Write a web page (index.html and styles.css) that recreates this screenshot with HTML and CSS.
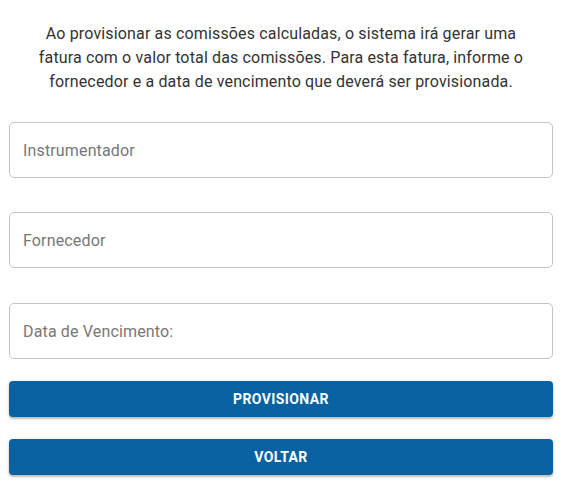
FILE: index.html
```html
<html>
<head>
	<link rel="stylesheet" href="styles.css">
</head>
<body>
	<div class="provision">
		<p class="intro">Ao provisionar as comissões calculadas, o sistema irá gerar uma<br>
			fatura com o valor total das comissões. Para esta fatura, informe o<br>
			fornecedor e a data de vencimento que deverá ser provisionada.</p>

		<div class="fields">
			<input class="field" type="text" placeholder="Instrumentador"/>
			<input class="field" type="text" placeholder="Fornecedor"/>
			<input class="field field-date" type="text" placeholder="Data de Vencimento:"/>
		</div>

		<div class="actions">
			<button class="btn">Provisionar</button>
			<button class="btn">Voltar</button>
		</div>
	</div>
</body>
</html>
```

FILE: styles.css
```css
body{
	margin: 0;
	background: #fff;
	font-family: Roboto, "Liberation Sans", sans-serif;
}

.provision {
	margin: 0 12px 0 9px;
	padding-top: 22px;
}

.intro {
	margin: 0 0 28px 0;
	text-align: center;
	font-size: 16px;
	line-height: 24px;
	letter-spacing: 0.15px;
	white-space: nowrap;
	color: #333;
}

.fields {
	display: flex;
	flex-direction: column;
	gap: 34px;
}
.field {
	box-sizing: border-box;
	height: 56px;
	width: 100%;
	padding: 0 13px;
	border: 1px solid #c4c4c4;
	border-radius: 5px;
	font-family: inherit;
	font-size: 16px;
	letter-spacing: 0.15px;
	color: #333;
	outline: none;
}
.field::placeholder{
	color: #777;
}
.field-date {
	margin-top: 1px;
}

.actions {
	display: flex;
	flex-direction: column;
	gap: 22px;
	margin-top: 22px;
}
.btn {
	height: 36px;
	border: none;
	border-radius: 4px;
	background: #0862a2;
	color: #fff;
	font-family: inherit;
	font-size: 14px;
	font-weight: 700;
	letter-spacing: 0.4px;
	text-transform: uppercase;
	box-shadow: 0 2px 2px rgba(0,0,0,0.2), 0 1px 4px rgba(0,0,0,0.12);
	cursor: pointer;
}
```
